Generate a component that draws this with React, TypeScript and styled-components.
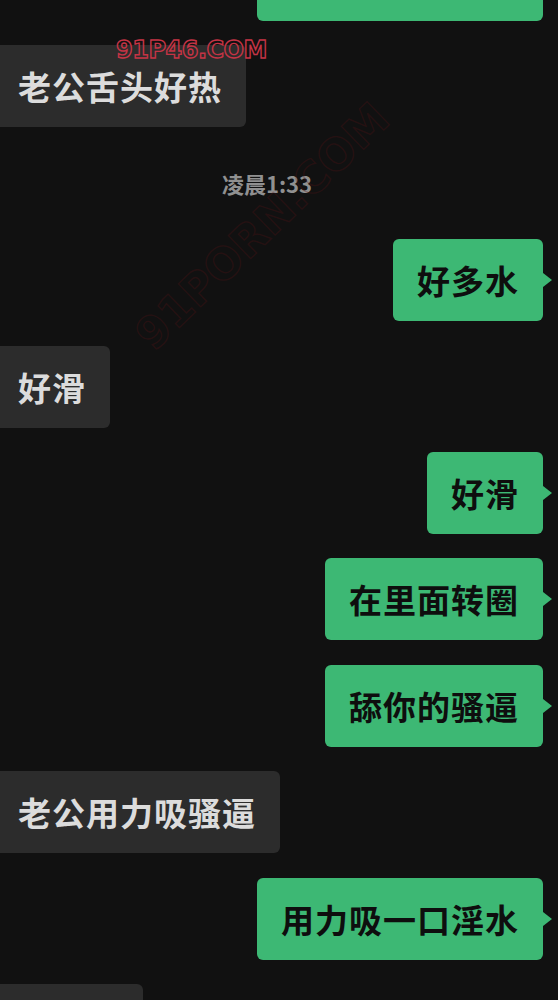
import styled, { createGlobalStyle } from "styled-components";

const GlobalStyle = createGlobalStyle`
  html, body {
    margin: 0;
    padding: 0;
    background: #111111;
  }
`;

const Screen = styled.div`
  position: relative;
  width: 558px;
  height: 1000px;
  overflow: hidden;
  background: #111111;
  font-family: "Noto Sans CJK SC", "Noto Sans", sans-serif;
`;

const Thread = styled.div`
  display: flex;
  flex-direction: column;
  gap: 24.4px;
  margin-top: -61px;
  padding-right: 15px;
`;

const Row = styled.div<{ $out?: boolean }>`
  display: flex;
  justify-content: ${(p) => (p.$out ? "flex-end" : "flex-start")};
`;

const Bubble = styled.div<{ $out?: boolean; $width?: number }>`
  position: relative;
  box-sizing: border-box;
  height: 82px;
  display: flex;
  align-items: center;
  padding: 0 24px 0 ${(p) => (p.$out ? "24px" : "26px")};
  margin-left: ${(p) => (p.$out ? "0" : "-8px")};
  width: ${(p) => (p.$width ? `${p.$width}px` : "auto")};
  border-radius: 6px;
  background: ${(p) => (p.$out ? "#3db874" : "#2c2c2c")};
  color: ${(p) => (p.$out ? "#0e0e0e" : "#dcdcdc")};
  font-size: 33px;
  font-weight: 700;
  letter-spacing: 1px;
  white-space: nowrap;

  ${(p) =>
    p.$out &&
    `
    &::after {
      content: "";
      position: absolute;
      right: -9px;
      top: 50%;
      margin-top: -7px;
      border-left: 9px solid #3db874;
      border-top: 7px solid transparent;
      border-bottom: 7px solid transparent;
    }
  `}
`;

const TimeRow = styled.div`
  height: 63px;
  display: flex;
  align-items: center;
  justify-content: center;
  padding-right: 9px;
`;

const TimeLabel = styled.span`
  color: #909090;
  font-size: 22px;
  font-weight: 700;
`;

const SiteMark = styled.div`
  position: absolute;
  left: 116px;
  top: 36px;
  font-family: "DejaVu Sans", sans-serif;
  font-weight: 700;
  font-size: 24px;
  letter-spacing: -0.5px;
  color: transparent;
  -webkit-text-stroke: 1.4px #c43445;
  pointer-events: none;
`;

const DiagonalMark = styled.div`
  position: absolute;
  left: 262px;
  top: 226px;
  transform: translate(-50%, -50%) rotate(-44deg);
  font-family: "DejaVu Sans", sans-serif;
  font-weight: 700;
  font-size: 44px;
  color: transparent;
  -webkit-text-stroke: 1.3px rgba(90, 18, 22, 0.3);
  white-space: nowrap;
  pointer-events: none;
`;

type Message =
  | { kind: "in" | "out"; text?: string; width?: number }
  | { kind: "time"; text: string };

const messages: Message[] = [
  { kind: "out", width: 286 },
  { kind: "in", text: "老公舌头好热" },
  { kind: "time", text: "凌晨1:33" },
  { kind: "out", text: "好多水" },
  { kind: "in", text: "好滑" },
  { kind: "out", text: "好滑" },
  { kind: "out", text: "在里面转圈" },
  { kind: "out", text: "舔你的骚逼" },
  { kind: "in", text: "老公用力吸骚逼" },
  { kind: "out", text: "用力吸一口淫水" },
  { kind: "in", width: 151 },
];

export default function App() {
  return (
    <>
      <GlobalStyle />
      <Screen>
        <Thread>
          {messages.map((m, i) =>
            m.kind === "time" ? (
              <TimeRow key={i}>
                <TimeLabel>{m.text}</TimeLabel>
              </TimeRow>
            ) : (
              <Row key={i} $out={m.kind === "out"}>
                <Bubble $out={m.kind === "out"} $width={m.width}>
                  {m.text}
                </Bubble>
              </Row>
            )
          )}
        </Thread>
        <DiagonalMark>91PORN.COM</DiagonalMark>
        <SiteMark>91P46.COM</SiteMark>
      </Screen>
    </>
  );
}
